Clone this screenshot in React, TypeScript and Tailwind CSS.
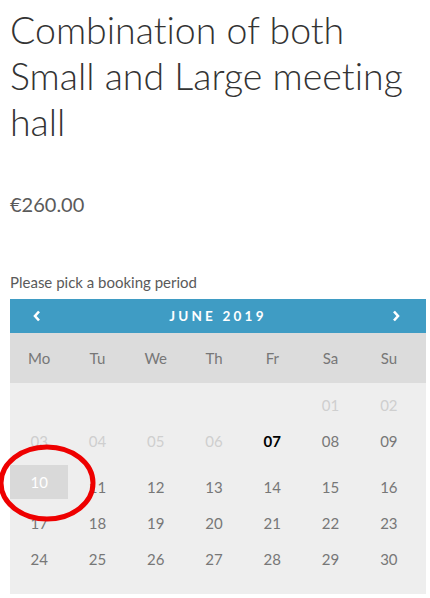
import React from "react";

const days = ["Mo", "Tu", "We", "Th", "Fr", "Sa", "Su"];

type Cell = { d: string; kind: "empty" | "off" | "today" | "on" | "sel" };

const weeks: Cell[][] = [
  [
    { d: "", kind: "empty" },
    { d: "", kind: "empty" },
    { d: "", kind: "empty" },
    { d: "", kind: "empty" },
    { d: "", kind: "empty" },
    { d: "01", kind: "off" },
    { d: "02", kind: "off" },
  ],
  [
    { d: "03", kind: "off" },
    { d: "04", kind: "off" },
    { d: "05", kind: "off" },
    { d: "06", kind: "off" },
    { d: "07", kind: "today" },
    { d: "08", kind: "on" },
    { d: "09", kind: "on" },
  ],
  [
    { d: "10", kind: "sel" },
    { d: "11", kind: "on" },
    { d: "12", kind: "on" },
    { d: "13", kind: "on" },
    { d: "14", kind: "on" },
    { d: "15", kind: "on" },
    { d: "16", kind: "on" },
  ],
  ["17", "18", "19", "20", "21", "22", "23"].map((d) => ({ d, kind: "on" as const })),
  ["24", "25", "26", "27", "28", "29", "30"].map((d) => ({ d, kind: "on" as const })),
];

function DayCell({ cell, tall }: { cell: Cell; tall: boolean }) {
  if (cell.kind === "sel") {
    return (
      <div className="mt-[6px] flex h-[34px] items-center justify-center bg-[#d9d9d9] text-white">
        {cell.d}
      </div>
    );
  }
  const color =
    cell.kind === "off"
      ? "text-[#cfcfcf]"
      : cell.kind === "today"
      ? "font-bold text-black"
      : "text-[#777]";
  return (
    <div className={`flex h-[36px] items-center justify-center ${tall ? "mt-[10px]" : ""} ${color}`}>
      {cell.d}
    </div>
  );
}

export default function App() {
  return (
    <div className="relative min-h-[598px] w-[430px] overflow-hidden bg-white pl-[10px] font-['Lato',sans-serif]">
      <h1 className="whitespace-nowrap pt-[7px] text-[37.5px] font-light leading-[46px] text-[#333] [font-variant-ligatures:none]">
        Combination of both
        <br />
        Small and Large meeting
        <br />
        hall
      </h1>
      <p className="mt-[45px] text-[20px] leading-[28px] text-[#5a5a5a]">€260.00</p>
      <p className="mt-[54px] text-[15px] leading-[20px] text-[#5a5a5a]">Please pick a booking period</p>

      <div className="mt-[7px] w-[416px]">
        <div className="flex h-[34px] items-center justify-between bg-[#3f9cc4] pl-[22px] pr-[25px] text-white">
          <svg width="10" height="12" viewBox="0 0 10 12">
            <path d="M7 1.5 L3 6 L7 10.5" fill="none" stroke="white" strokeWidth="2.6" />
          </svg>
          <span className="pl-[3px] text-[13.5px] font-bold tracking-[3.2px]">JUNE 2019</span>
          <svg width="10" height="12" viewBox="0 0 10 12">
            <path d="M3 1.5 L7 6 L3 10.5" fill="none" stroke="white" strokeWidth="2.6" />
          </svg>
        </div>
        <div className="bg-[#dcdcdc]">
          <div className="grid h-[50px] w-[408px] grid-cols-7 items-center text-[15px] text-[#777]">
            {days.map((d) => (
              <div key={d} className="text-center">
                {d}
              </div>
            ))}
          </div>
        </div>
        <div className="bg-[#eeeeee] pt-[4px] pb-[17px] text-[15px]">
          {weeks.map((w, i) => (
            <div key={i} className={`grid w-[408px] grid-cols-7 ${i === 2 ? "h-[46px]" : "h-[36px]"}`}>
              {w.map((c, j) => (
                <DayCell key={j} cell={c} tall={i === 2} />
              ))}
            </div>
          ))}
        </div>
      </div>

      <svg className="absolute left-0 top-[440px]" width="100" height="86" viewBox="0 0 100 86">
        <ellipse cx="47" cy="43" rx="46" ry="36" fill="none" stroke="#ee0000" strokeWidth="5" />
      </svg>
    </div>
  );
}
